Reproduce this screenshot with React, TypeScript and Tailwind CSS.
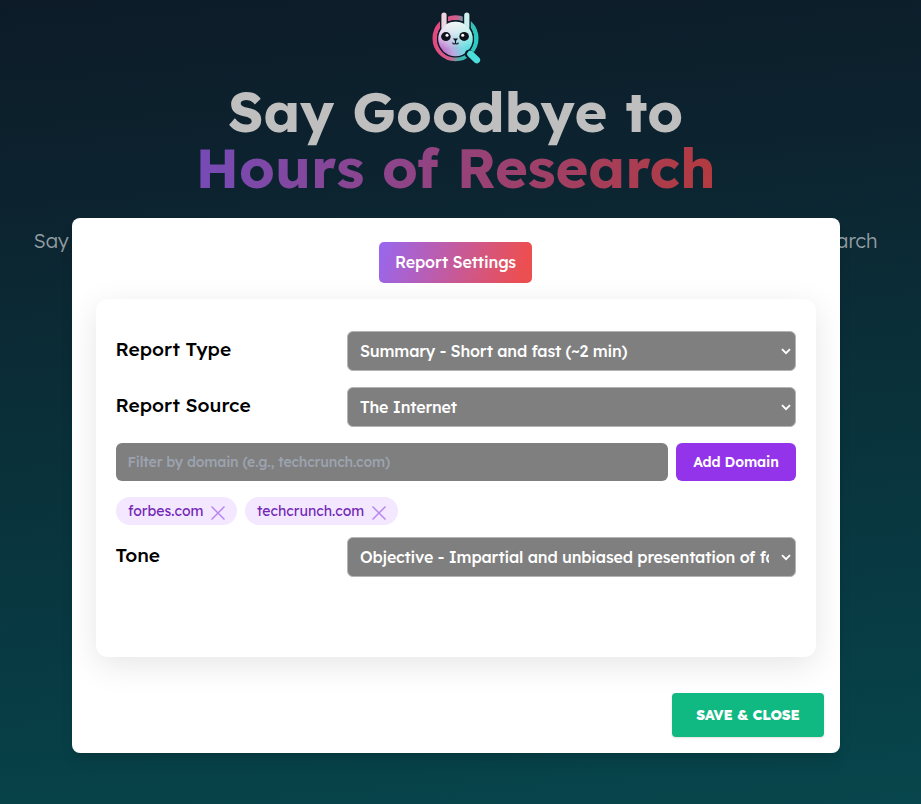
import React from "react";

const font = "font-['Lexend','Inter','Noto_Sans',sans-serif]";

function Logo() {
  return (
    <svg className="shrink-0" width="50" height="54" viewBox="0 0 50 54" fill="none">
      <defs>
        <linearGradient id="ring" x1="0" y1="22" x2="50" y2="30" gradientUnits="userSpaceOnUse">
          <stop offset="0.1" stopColor="#e5487f" />
          <stop offset="0.45" stopColor="#d0608c" />
          <stop offset="0.65" stopColor="#3fb5ae" />
          <stop offset="1" stopColor="#25d3c8" />
        </linearGradient>
        <linearGradient id="face" x1="9" y1="42" x2="42" y2="30" gradientUnits="userSpaceOnUse">
          <stop stopColor="#c25bc4" />
          <stop offset="0.35" stopColor="#bba8e0" />
          <stop offset="0.65" stopColor="#74d8e2" />
          <stop offset="1" stopColor="#35e4da" />
        </linearGradient>
        <linearGradient id="shine" x1="24" y1="10" x2="24" y2="38" gradientUnits="userSpaceOnUse">
          <stop stopColor="#f4f4f5" />
          <stop offset="0.4" stopColor="#f4f4f5" stopOpacity="0.75" />
          <stop offset="1" stopColor="#f4f4f5" stopOpacity="0" />
        </linearGradient>
      </defs>
      <circle cx="24.5" cy="27.3" r="20.7" stroke="url(#ring)" strokeWidth="4.6" />
      <path d="M13 16V4M35.8 16V4" stroke="#0d1b29" strokeWidth="8" strokeLinecap="round" />
      <circle cx="24.5" cy="28" r="17.6" fill="#0d1b29" stroke="#0d1b29" strokeWidth="2" />
      <path d="M13 16V4" stroke="#f0d3dc" strokeWidth="5.2" strokeLinecap="round" />
      <path d="M35.8 16V4" stroke="#cdeeee" strokeWidth="5.2" strokeLinecap="round" />
      <circle cx="24.5" cy="28" r="17.2" fill="url(#face)" />
      <circle cx="24.5" cy="28" r="17.2" fill="url(#shine)" />
      <path d="m38 43 7.5 5.5" stroke="#0d1b29" strokeWidth="8.5" strokeLinecap="round" />
      <path d="m39.5 43 6.3 6" stroke="#4cdedb" strokeWidth="6.6" strokeLinecap="round" />
      <ellipse cx="14.9" cy="25.6" rx="4.8" ry="4.5" fill="#10131c" />
      <ellipse cx="33.1" cy="25.4" rx="4.8" ry="4.5" fill="#10131c" />
      <circle cx="16" cy="24.2" r="1.5" fill="#fff" />
      <circle cx="31.7" cy="24.2" r="1.5" fill="#fff" />
      <path d="M23.2 28.2h2.6l-1.3 1.5zM24.5 29v3.2M21.8 32c.6 1.3 2.1 1.3 2.7.2.6 1.1 2.1 1.1 2.7-.2" stroke="#10131c" strokeWidth="1.2" strokeLinecap="round" />
    </svg>
  );
}

function Select({ children }: { children: React.ReactNode }) {
  return (
    <div className="flex h-10 w-[449px] items-center rounded-md border border-[#b4b4b4] bg-[#7f7f7f] pl-3 pr-1 text-white">
      <span className="w-[409px] overflow-hidden whitespace-nowrap text-base font-medium tracking-[-0.18px]">
        {children}
      </span>
      <svg className="ml-auto" width="10" height="7" viewBox="0 0 10 7" fill="none">
        <path d="m1 1.2 4 4 4-4" stroke="white" strokeWidth="1.9" />
      </svg>
    </div>
  );
}

function Label({ children }: { children: React.ReactNode }) {
  return (
    <span className="-ml-[0.5px] whitespace-nowrap pb-[5px] text-[19.2px] leading-7 font-medium text-black">{children}</span>
  );
}

function Tag({ children, width }: { children: string; width: string }) {
  return (
    <span className={`flex h-7 items-center justify-between rounded-full bg-[#f3e8ff] px-3 text-sm text-[#7427b5] ${width}`}>
      <span className="whitespace-nowrap">{children}</span>
      <svg className="mt-1" width="14" height="14" viewBox="0 0 14 14">
        <path d="m.5.5 13 13M13.5.5l-13 13" stroke="#b988ee" strokeWidth="1.5" />
      </svg>
    </span>
  );
}

export default function App() {
  return (
    <div className={`relative h-[804px] w-[921px] overflow-hidden bg-[linear-gradient(175deg,#0d1b28_0%,#0c2430_25%,#0a3039_50%,#083a43_75%,#07464c_100%)] ${font}`}>
      <header className="flex w-[911px] flex-col items-center pt-[11px] text-center">
        <Logo />
        <h1 className="mt-[18px] whitespace-nowrap text-[56px] font-bold leading-[56px] text-[#bfbfbf]">
          <span className="block">Say Goodbye to</span>
          <span className="block bg-[linear-gradient(100deg,#754bb8,#b43a3e)] bg-clip-text text-transparent">
            Hours of Research
          </span>
        </h1>
        <p className="mt-8 whitespace-nowrap text-xl font-light text-[#929da3]">
          Say Hello to GPT Researcher, your AI mate for rapid insights and comprehensive research
        </p>
      </header>

      <section className="absolute left-[72px] top-[218px] flex h-[535px] w-[768px] flex-col rounded-lg bg-white px-6 pt-6 shadow-lg">
        <div className="mr-px flex h-[41px] w-[153px] items-center justify-center self-center whitespace-nowrap rounded-[5px] bg-[linear-gradient(105deg,#9867f0,#ec4f52_92%)] pb-0.5 text-base font-medium tracking-[-0.12px] text-white">
          Report Settings
        </div>
        <div className="mt-4 flex h-[358px] w-[720px] flex-col rounded-xl bg-white px-5 pt-8 shadow-[0_8px_32px_rgba(0,0,0,0.1)]">
          <div className="flex items-center justify-between">
            <Label>Report Type</Label>
            <Select>Summary - Short and fast (~2 min)</Select>
          </div>
          <div className="mt-4 flex items-center justify-between">
            <Label>Report Source</Label>
            <Select>The Internet</Select>
          </div>
          <div className="mt-4 flex gap-2">
            <div className="flex h-[38px] w-[552px] items-center rounded-md bg-[#7f7f7f] pl-[11.5px] text-sm font-medium text-[#9ca3af]">
              <span className="whitespace-nowrap tracking-[-0.16px]">Filter by domain (e.g., techcrunch.com)</span>
            </div>
            <button className="flex h-[38px] w-[120px] items-center justify-center rounded-md bg-[#9333ea] text-sm font-semibold text-white">
              <span className="whitespace-nowrap tracking-[-0.12px]">Add Domain</span>
            </button>
          </div>
          <div className="mt-4 flex gap-2">
            <Tag width="w-[121px]">forbes.com</Tag>
            <Tag width="w-[153px]">techcrunch.com</Tag>
          </div>
          <div className="mt-3 flex items-center justify-between">
            <Label>Tone</Label>
            <Select>Objective - Impartial and unbiased presentation of facts and findings</Select>
          </div>
        </div>
        <button className="-mr-2 mt-9 flex h-11 w-[152px] items-center justify-center self-end whitespace-nowrap rounded bg-[#10b981] text-sm font-extrabold text-white shadow-sm">
          <span className="tracking-[-0.15px]">SAVE &amp; CLOSE</span>
        </button>
      </section>
    </div>
  );
}
